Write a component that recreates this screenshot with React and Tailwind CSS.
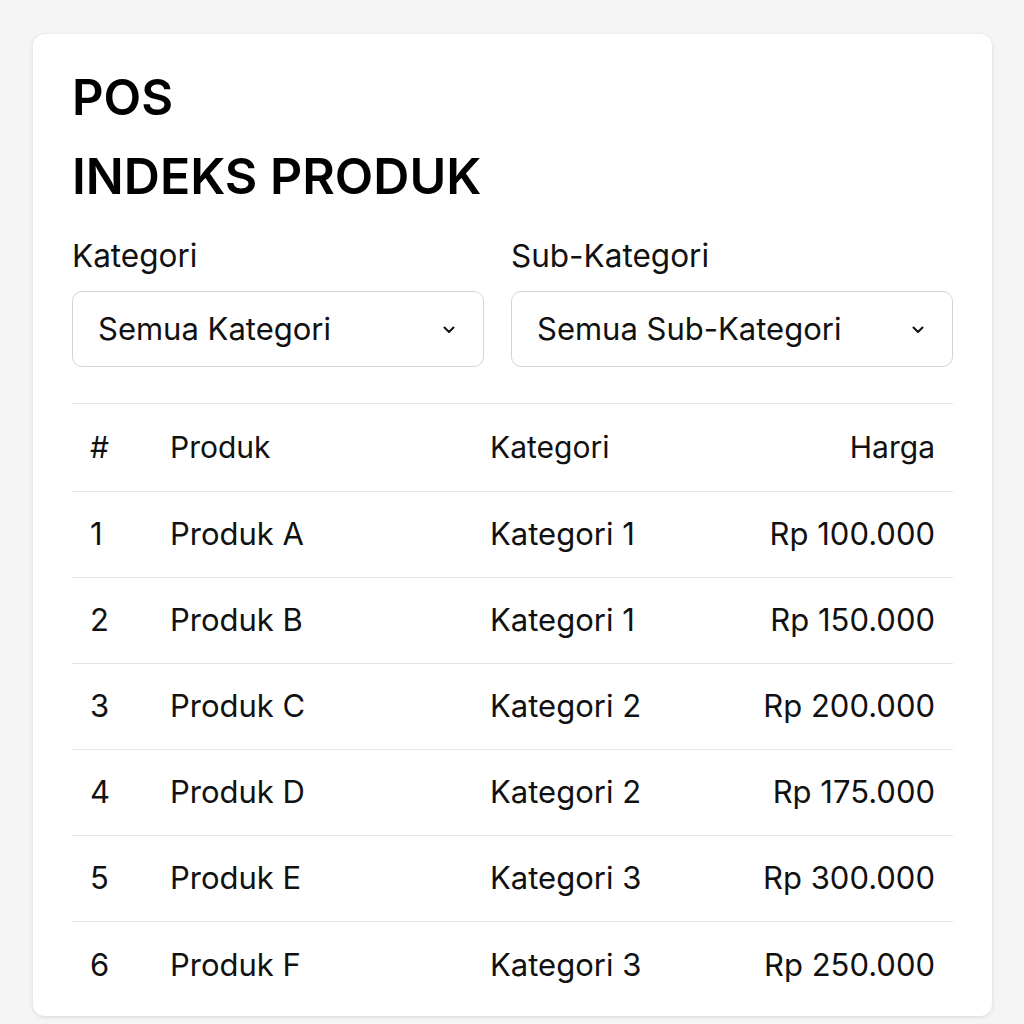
import React from "react";

const rows = [
  ["1", "Produk A", "Kategori 1", "Rp 100.000"],
  ["2", "Produk B", "Kategori 1", "Rp 150.000"],
  ["3", "Produk C", "Kategori 2", "Rp 200.000"],
  ["4", "Produk D", "Kategori 2", "Rp 175.000"],
  ["5", "Produk E", "Kategori 3", "Rp 300.000"],
  ["6", "Produk F", "Kategori 3", "Rp 250.000"],
];

function Chevron() {
  return (
    <svg width="14" height="9" viewBox="0 0 14 9" fill="none" className="shrink-0">
      <path d="M2.5 2.5l4.5 4.5 4.5-4.5" stroke="#111" strokeWidth="2" strokeLinecap="round" strokeLinejoin="round" />
    </svg>
  );
}

function Select({ label, value, className }) {
  return (
    <div className={className}>
      <div className="text-[31.5px] leading-[36px] text-[#111]">{label}</div>
      <div className="mt-[17px] h-[76px] rounded-[10px] border border-[#d4d4d4] bg-white flex items-center justify-between pl-[25px] pr-[27px]">
        <span className="text-[31px] text-[#111]">{value}</span>
        <Chevron />
      </div>
    </div>
  );
}

export default function App() {
  return (
    <div
      className="min-h-[1024px] w-[1024px] bg-[#f5f5f5] pt-[34px] pl-[33px]"
      style={{ fontFamily: "Inter, 'Noto Sans', sans-serif" }}
    >
      <div className="w-[959px] h-[982px] bg-white rounded-[12px] shadow-[0_1px_4px_rgba(0,0,0,0.12)] px-[39px] pt-[25px] pb-[8px]">
        <h1 className="text-[49px] leading-[78px] font-semibold text-black">POS</h1>
        <h2 className="text-[50px] leading-[78px] font-semibold text-black">INDEKS PRODUK</h2>
        <div className="mt-[23px] flex gap-[27px]">
          <Select label="Kategori" value="Semua Kategori" className="w-[412px]" />
          <Select label="Sub-Kategori" value="Semua Sub-Kategori" className="flex-1" />
        </div>
        <div className="mt-[36px] border-t border-[#e5e5e5]">
          <div className="h-[88px] flex items-center border-b border-[#e5e5e5] text-[30px] text-[#111]">
            <div className="w-[98px] pl-[18px]">#</div>
            <div className="w-[320px]">Produk</div>
            <div className="flex-1">Kategori</div>
            <div className="pr-[18px] text-right">Harga</div>
          </div>
          {rows.map((r, i) => (
            <div
              key={r[0]}
              className={`h-[86px] flex items-center text-[31px] text-[#111] ${i < rows.length - 1 ? "border-b border-[#e5e5e5]" : ""}`}
            >
              <div className="w-[98px] pl-[18px]">{r[0]}</div>
              <div className="w-[320px]">{r[1]}</div>
              <div className="flex-1">{r[2]}</div>
              <div className="pr-[18px] text-right">{r[3]}</div>
            </div>
          ))}
        </div>
      </div>
    </div>
  );
}
